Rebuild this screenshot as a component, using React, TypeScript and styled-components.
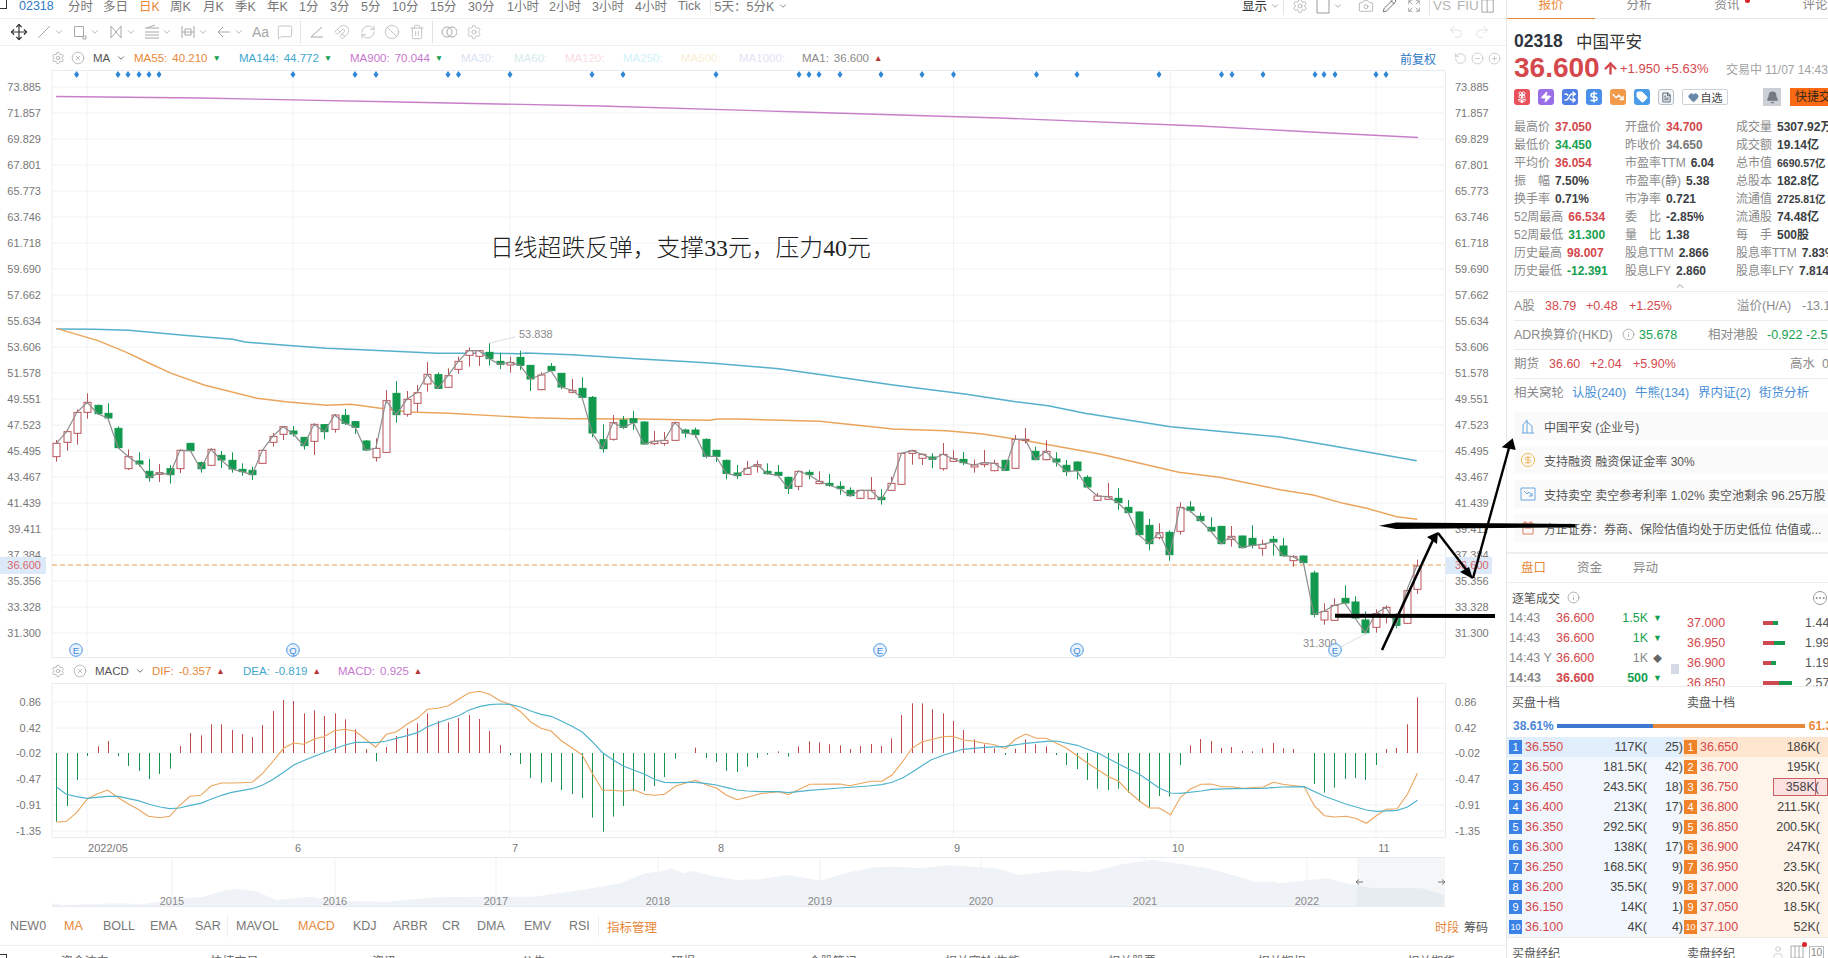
import React from "react";
import styled, { createGlobalStyle } from "styled-components";
import {
  Move, ChevronDown, ChevronUp, Settings, CircleX, Camera, Pencil, Trash2, Ban, Magnet, RefreshCw,
  Undo2, Redo2, RotateCcw, CircleMinus, CirclePlus, ArrowUp, Flower2, Zap, Shuffle, DollarSign, TrendingDown, Tag,
  FileText, Heart, Bell, Info, Ellipsis, CircleDollarSign, MessageSquare, User,
} from "lucide-react";

const Global = createGlobalStyle`
  html, body { margin: 0; padding: 0; background: #fff; overflow: hidden; }
  * { box-sizing: border-box; }
  body { font-family: "Liberation Sans", "Noto Sans CJK SC", sans-serif; font-size: 12px; color: #555; }
`;

const RED = "#d4484c";
const GREEN = "#16a04f";
const ORANGE = "#e8883a";
const BLUE = "#4a8fd6";

/* ---------- page ---------- */
const Page = styled.div`
  position: relative;
  width: 1828px;
  height: 958px;
  display: flex;
  overflow: hidden;
  background: #fff;
`;
const MainCol = styled.main`
  width: 1506px;
  flex: none;
  display: flex;
  flex-direction: column;
`;
const Overlay = styled.svg`
  position: absolute;
  left: 0;
  top: 0;
  pointer-events: none;
`;

/* ---------- top toolbar ---------- */
const TopBar = styled.div`
  height: 19px;
  flex: none;
  display: flex;
  align-items: center;
  padding-bottom: 7px;
  border-bottom: 1px solid #eceef1;
  overflow: hidden;
`;
const Corner = styled.span`
  width: 7px;
  height: 10px;
  margin: -3px 12px 0 0;
  border-right: 1px solid #333;
  border-bottom: 1px solid #333;
  flex: none;
`;
const Period = styled.span<{ $w: number; $c?: string }>`
  width: ${(p) => p.$w}px;
  flex: none;
  font-size: 12.5px;
  color: ${(p) => p.$c || "#777"};
  white-space: nowrap;
`;
const Sep = styled.span<{ $h?: number; $c?: string }>`
  width: 1px;
  height: ${(p) => p.$h || 18}px;
  background: ${(p) => p.$c || "#e3e5e8"};
  flex: none;
`;
const TopRight = styled.div`
  margin-left: auto;
  display: flex;
  align-items: center;
  width: 264px;
  color: #9a9a9a;
`;
const IconSlot = styled.span<{ $w: number }>`
  width: ${(p) => p.$w}px;
  flex: none;
  display: inline-flex;
  align-items: center;
`;
const GrayWord = styled.span<{ $w: number }>`
  width: ${(p) => p.$w}px;
  flex: none;
  padding-left: 3px;
  font-size: 13.5px;
  color: #b4b4b4;
`;

/* ---------- drawing toolbar ---------- */
const DrawBar = styled.div`
  height: 27px;
  flex: none;
  display: flex;
  align-items: center;
  padding: 0 8px;
  border-bottom: 1px solid #eceef1;
  color: #a8a8a8;
`;
const DrawMove = styled.span`
  width: 28px;
  padding-left: 2px;
  color: #333;
  display: inline-flex;
`;
const DrawPair = styled.span`
  width: 36px;
  flex: none;
  display: inline-flex;
  align-items: center;
  gap: 2px;
`;
const AaLabel = styled.span`
  font-size: 14px;
`;
const DrawRight = styled.div`
  margin-left: auto;
  display: flex;
  gap: 10px;
  padding-right: 8px;
  color: #d2d2d2;
`;

/* ---------- indicator legends ---------- */
const Legend = styled.div<{ $h: number }>`
  height: ${(p) => p.$h}px;
  flex: none;
  display: flex;
  align-items: center;
  padding-left: 51px;
  color: #8d8d8d;
  font-size: 11.5px;
`;
const LegendIcon = styled.span<{ $w: number }>`
  width: ${(p) => p.$w}px;
  flex: none;
  display: inline-flex;
  align-items: center;
`;
const LegendName = styled.span<{ $w: number }>`
  width: ${(p) => p.$w}px;
  flex: none;
  font-size: 11.5px;
  color: #555;
  display: inline-flex;
  align-items: center;
  gap: 6px;
`;
const MaItem = styled.span<{ $w: number; $c: string; $dim?: boolean }>`
  width: ${(p) => p.$w}px;
  flex: none;
  color: ${(p) => p.$c};
  opacity: ${(p) => (p.$dim ? 0.3 : 1)};
  display: inline-flex;
  align-items: center;
  gap: 5px;
  white-space: nowrap;
`;
const Mark = styled.i<{ $c: string }>`
  font-style: normal;
  font-size: 8.5px;
  color: ${(p) => p.$c};
`;
const LegendRight = styled.div`
  margin-left: auto;
  display: flex;
  align-items: center;
  gap: 4px;
  padding-right: 5px;
  color: #a5a5a5;
`;
const Adjust = styled.span`
  color: #2b78c5;
  font-size: 12px;
  margin-right: 14px;
`;

const ChartSvg = styled.svg`
  display: block;
  flex: none;
  text {
    font-family: "Liberation Sans", "Noto Sans CJK SC", sans-serif;
  }
`;

/* ---------- indicator bar ---------- */
const IndicatorBar = styled.div`
  height: 39px;
  flex: none;
  display: flex;
  align-items: center;
  padding-left: 10px;
  border-bottom: 1px solid #eceef1;
`;
const Ind = styled.span<{ $w: number; $on?: boolean }>`
  width: ${(p) => p.$w}px;
  flex: none;
  font-size: 12.5px;
  color: ${(p) => (p.$on ? ORANGE : "#777")};
`;
const IndRight = styled.div`
  margin-left: auto;
  padding-right: 18px;
  display: flex;
  gap: 5px;
  font-size: 12px;
`;
const BottomTabs = styled.div`
  display: flex;
  padding-top: 6px;
  color: #666;
`;
const BottomCorner = styled.span`
  width: 7px;
  height: 12px;
  margin: 2px 3px 0 0;
  border-top: 1px solid #333;
  border-right: 1px solid #333;
  flex: none;
`;
const BottomTab = styled.span`
  width: 149.6px;
  flex: none;
  text-align: center;
  font-size: 12px;
`;

/* ---------- sidebar ---------- */
const Side = styled.aside`
  width: 322px;
  flex: none;
  border-left: 1px solid #e6e7ea;
  overflow: hidden;
`;
const SideTabs = styled.div`
  display: flex;
  height: 19px;
  border-bottom: 1px solid #e6e7ea;
`;
const SideTab = styled.div<{ $on?: boolean }>`
  position: relative;
  width: 88px;
  flex: none;
  height: 19px;
  line-height: 10px;
  text-align: center;
  font-size: 12.5px;
  color: ${(p) => (p.$on ? ORANGE : "#888")};
  border-bottom: 1px solid ${(p) => (p.$on ? ORANGE : "transparent")};
`;
const RedDot = styled.i`
  position: absolute;
  left: 62px;
  top: -2px;
  width: 5px;
  height: 5px;
  border-radius: 50%;
  background: #d8232a;
`;
const Quote = styled.section`
  padding-left: 7px;
`;
const TitleRow = styled.div`
  margin-top: 7px;
  height: 30px;
  display: flex;
  align-items: center;
  color: #333;
`;
const Code = styled.b`
  width: 62px;
  font-size: 17.5px;
  color: #2f3640;
`;
const StockName = styled.span`
  font-size: 16.5px;
`;
const PriceRow = styled.div`
  height: 24px;
  display: flex;
  align-items: center;
  white-space: nowrap;
  color: ${RED};
`;
const BigPrice = styled.b`
  font-size: 28px;
  width: 88px;
  flex: none;
`;
const UpArrow = styled(ArrowUp)`
  flex: none;
  margin-right: 1px;
`;
const PriceChange = styled.span<{ $w: number }>`
  width: ${(p) => p.$w}px;
  flex: none;
  font-size: 13px;
`;
const TradeTime = styled.span`
  font-size: 12px;
  color: #a2a2a2;
`;
const BadgeRow = styled.div`
  margin-top: 8px;
  height: 18px;
  display: flex;
  align-items: center;
  white-space: nowrap;
`;
const Badge = styled.span<{ $c: string; $line?: boolean }>`
  width: 16px;
  height: 16px;
  margin-right: 8px;
  flex: none;
  border-radius: 3px;
  display: inline-flex;
  align-items: center;
  justify-content: center;
  background: ${(p) => (p.$line ? "#f4f6f8" : p.$c)};
  border: ${(p) => (p.$line ? "1px solid #b8c0c8" : "none")};
  color: ${(p) => (p.$line ? "#5a6a7a" : "#fff")};
`;
const WatchBtn = styled.span`
  width: 46px;
  height: 16px;
  border: 1px solid #ccd2d8;
  border-radius: 2px;
  display: inline-flex;
  align-items: center;
  justify-content: center;
  gap: 2px;
  font-size: 11px;
  color: #444;
  flex: none;
`;
const BellBox = styled.span`
  margin-left: 35px;
  width: 18px;
  height: 18px;
  background: #ccd0d6;
  color: #747a81;
  display: inline-flex;
  align-items: center;
  justify-content: center;
  flex: none;
`;
const QuickTrade = styled.span`
  margin-left: 9px;
  height: 18px;
  width: 60px;
  padding-left: 5px;
  background: #fb6a12;
  color: #3a2a1a;
  font-size: 12px;
  line-height: 18px;
  flex: none;
`;
const StatGrid = styled.div`
  margin-top: 12px;
  display: grid;
  grid-template-columns: 111px 111px 111px;
  grid-auto-flow: column;
  grid-template-rows: repeat(9, 18px);
  width: 333px;
`;
const Stat = styled.div`
  display: flex;
  align-items: baseline;
  line-height: 18px;
  gap: 5px;
  white-space: nowrap;
  color: #8a8a8a;
  font-size: 12px;
`;
const StatVal = styled.b<{ $c?: string; $small?: boolean }>`
  color: ${(p) => p.$c || "#3c3f44"};
  font-size: ${(p) => (p.$small ? 10.5 : 12)}px;
`;
const Caret = styled.div`
  height: 12px;
  margin-left: -7px;
  padding-left: 167px;
  border-bottom: 1px solid #ececec;
  color: #999;
  line-height: 0;
`;
const InfoRow = styled.div<{ $last?: boolean }>`
  height: 29px;
  display: flex;
  align-items: baseline;
  line-height: 28px;
  white-space: nowrap;
  font-size: 12.5px;
  color: #8a8a8a;
  border-bottom: 1px solid ${(p) => (p.$last ? "transparent" : "#ececec")};
`;
const Cell = styled.span<{ $w?: number; $c?: string }>`
  ${(p) => (p.$w ? `width: ${p.$w}px; flex: none;` : "")}
  color: ${(p) => p.$c || "inherit"};
  svg {
    vertical-align: -2px;
  }
`;
const Notices = styled.div`
  margin-top: 4px;
  display: flex;
  flex-direction: column;
  gap: 6px;
`;
const Notice = styled.div`
  height: 28px;
  background: #fafafa;
  display: flex;
  align-items: center;
  gap: 8px;
  padding-left: 6px;
  font-size: 12px;
  color: #555;
  white-space: nowrap;
`;
const SubTabs = styled.div`
  margin-top: 10px;
  height: 31px;
  border-top: 2px solid #eeeeee;
  border-bottom: 1px solid #ececec;
  display: flex;
  align-items: center;
  padding: 0 0 3px 14px;
`;
const SubTab = styled.span<{ $on?: boolean }>`
  width: 56px;
  font-size: 12.5px;
  color: ${(p) => (p.$on ? ORANGE : "#888")};
`;
const TradesHead = styled.div`
  height: 29px;
  display: flex;
  align-items: center;
  padding: 0 1px 0 5px;
  color: #555;
  font-size: 12px;
  gap: 7px;
`;
const MoreDots = styled(Ellipsis)`
  margin-left: auto;
  border: 1px solid #999;
  border-radius: 50%;
  color: #888;
`;
const TradesBody = styled.div`
  height: 75px;
  overflow: hidden;
  display: flex;
  border-bottom: 1px solid #ececec;
`;
const TickCol = styled.div`
  width: 160px;
  flex: none;
  margin-top: -4px;
`;
const Tick = styled.div<{ $bold?: boolean }>`
  height: 20px;
  display: flex;
  align-items: center;
  font-size: 12.5px;
  font-weight: ${(p) => (p.$bold ? 700 : 400)};
  color: #888;
  padding-left: 2px;
`;
const TickTime = styled.span`
  width: 47px;
  flex: none;
  white-space: nowrap;
`;
const TickPrice = styled.span`
  width: 46px;
  flex: none;
  color: ${RED};
`;
const TickVol = styled.span<{ $c: string }>`
  width: 46px;
  flex: none;
  text-align: right;
  color: ${(p) => p.$c};
`;
const TickMark = styled.span<{ $c: string }>`
  margin-left: 5px;
  font-size: 9px;
  color: ${(p) => p.$c};
`;
const ScrollCol = styled.div`
  width: 20px;
  flex: none;
  padding: 52px 0 0 4px;
`;
const ScrollThumb = styled.div`
  width: 8px;
  height: 10px;
  background: #d4dbe6;
`;
const BookCol = styled.div`
  margin-top: 1px;
  flex: 1;
`;
const BookRow = styled.div`
  height: 20px;
  display: flex;
  align-items: center;
  font-size: 12.5px;
  white-space: nowrap;
`;
const BookPrice = styled.span`
  width: 76px;
  flex: none;
  color: ${RED};
`;
const BookBar = styled.span`
  width: 42px;
  flex: none;
  display: flex;
  height: 4px;
`;
const BarPart = styled.i<{ $c: string; $w: number }>`
  width: ${(p) => p.$w}px;
  background: ${(p) => p.$c};
`;
const Heads = styled.div`
  height: 28px;
  display: flex;
  align-items: center;
  padding-left: 5px;
  color: #555;
`;
const HeadCell = styled.span`
  width: 175px;
  flex: none;
  font-size: 12px;
`;
const Ratio = styled.div`
  height: 22px;
  display: flex;
  align-items: center;
  padding-left: 6px;
  font-size: 12px;
  font-weight: 700;
  color: #4c86d8;
`;
const RatioBar = styled.i<{ $c: string; $w: number; $ml?: number }>`
  width: ${(p) => p.$w}px;
  height: 4px;
  background: ${(p) => p.$c};
  margin-left: ${(p) => p.$ml || 0}px;
  flex: none;
`;
const RatioEnd = styled.span`
  margin-left: 4px;
  color: ${ORANGE};
`;
const Orders = styled.div`
  border-bottom: 1px solid #ececec;
`;
const OrderRow = styled.div`
  height: 20px;
  display: flex;
  font-size: 12.5px;
  color: #444;
`;
const BuySide = styled.div<{ $top?: boolean }>`
  width: 176px;
  flex: none;
  display: flex;
  align-items: center;
  padding-left: 2px;
  background: ${(p) => (p.$top ? "#e1eefb" : "#f2f7fe")};
`;
const SellSide = styled.div<{ $top?: boolean }>`
  flex: 1;
  display: flex;
  align-items: center;
  padding-left: 1px;
  background: ${(p) => (p.$top ? "#fde5cf" : "#fff4ea")};
`;
const Num = styled.span<{ $c: string; $small?: boolean }>`
  width: 13px;
  height: 14px;
  flex: none;
  background: ${(p) => p.$c};
  color: #fff;
  font-size: ${(p) => (p.$small ? 9 : 11)}px;
  line-height: 14px;
  text-align: center;
`;
const OrderPrice = styled.span`
  margin-left: 3px;
  width: 40px;
  flex: none;
  color: ${RED};
  font-size: 12.5px;
`;
const OrderVol = styled.span`
  flex: 1;
  text-align: right;
`;
const OrderCount = styled.span`
  width: 36px;
  flex: none;
  text-align: right;
`;
const SellVol = styled.span<{ $hot?: boolean }>`
  position: relative;
  margin-left: auto;
  width: 55px;
  height: ${(p) => (p.$hot ? 18 : 20)}px;
  line-height: ${(p) => (p.$hot ? 16 : 20)}px;
  padding-right: 8px;
  text-align: right;
  white-space: nowrap;
  ${(p) =>
    p.$hot
      ? `background:#fde0e0;border:1px solid #c96060;
         &::after{content:"";position:absolute;right:11px;top:0;bottom:0;width:1px;background:#c96060;}`
      : ""}
`;
const Brokers = styled.div`
  height: 28px;
  display: flex;
  align-items: center;
  padding-left: 5px;
  color: #555;
`;
const BrokerIcons = styled.div`
  display: flex;
  align-items: center;
  gap: 4px;
  color: #aaa;
  margin-left: -91px;
`;
const BarsIcon = styled.span`
  position: relative;
  display: inline-flex;
  &::after {
    content: "";
    position: absolute;
    right: -2px;
    top: -2px;
    width: 5px;
    height: 5px;
    border-radius: 50%;
    background: #d8232a;
  }
`;
const TenBox = styled.span`
  border: 1px solid #bbb;
  padding: 0 1px;
  font-size: 10px;
  color: #888;
`;

/* ---------- small drawn icons ---------- */
const Glyph: React.FC<{ d: string; size?: number }> = ({ d, size = 16 }) => (
  <svg width={size} height={size} viewBox="0 0 16 16" fill="none" stroke="currentColor" strokeWidth="1">
    <path d={d} />
  </svg>
);
const G = {
  line: "M2 14L14 2",
  rect: "M2.5 2.5H11.5V12.5H2.5ZM11 12H14V15H11Z",
  cross: "M3 2L13 14M13 2L3 14M3 2V14M13 2V14",
  fib: "M1 4H15M1 8H15M1 11H15M1 14H15M3 4L11 1",
  width: "M2 2V14M14 2V14M2 8H14M5 5H11V11H5Z",
  arrow: "M14 8H2M7 3L2 8L7 13",
  angle: "M2 13L13 3M2 13H14",
  circles: "M6 3a5 5 0 1 0 0 10a5 5 0 1 0 0-10ZM11 3a5 5 0 1 0 0 10a5 5 0 1 0 0-10Z",
  frame: "M2 1H14V15H2Z",
  expand: "M2 6V2H6M10 2H14V6M14 10V14H10M6 14H2V10M2 2L6 6M14 2L10 6M14 14L10 10M2 14L6 10",
  ibox: "M1 1H14V15H1ZM7 1V15",
  building: "M2 15H14M3 15V7L7 2V15M7 4L12 8V15",
  shortDown: "M1 2H15V14H1ZM4 5L7 8L9 6L12 10M12 7V10H9",
  doc: "M3 3H13V14H3ZM5 1V4M11 1V4M5 8H11",
  bars: "M2 2H14V14H2ZM6 2V14M10 2V14",
};

/* ---------- chart data ---------- */
type C = [number, number, number, number, number];
const batch1: C[] = [
  [1,400,440,390,455],[1,365,397,358,422],[1,307,370,298,404],[1,277,307,250,326],[0,286,311,284,313],[0,310,324,280,325],
  [0,355,413,349,415],[1,440,476,418,480],[0,453,462,427,470],[0,484,503,447,515],[1,488,493,462,516],[0,476,494,465,521],
  [1,421,476,418,489],[0,400,422,400,423],[0,458,476,455,488],[1,418,466,415,468],[0,436,450,423,474],[0,451,477,427,488],
  [0,478,485,460,497],[0,481,494,470,510],[1,421,460,420,462],[1,379,397,369,410],[1,350,373,348,390],[0,363,372,348,380],
  [0,382,407,381,419],[1,343,394,340,435],[0,344,365,342,388],[1,315,358,312,368],[0,316,340,297,345],[0,335,352,333,372],
  [0,393,420,390,423],[1,415,443,385,455],[1,272,427,240,428],[0,250,314,213,338],[1,268,313,243,320],[1,248,280,225,305],
  [1,193,222,156,245],[0,194,235,187,237],[1,197,232,175,233],[1,154,178,140,191],[1,122,136,112,170],[1,122,139,120,168],
  [0,127,146,100,167],[0,154,163,128,177],[1,157,165,140,188],[0,142,166,122,180],[0,166,207,165,243],[1,195,239,187,241],
  [0,169,182,159,186],[0,190,231,189,238],[1,241,247,207,250],[0,235,262,202,264],[0,262,369,258,382],[0,389,416,343,428],
  [1,338,388,315,392],[0,330,352,318,357],[0,326,338,303,360],[0,336,402,334,403],[1,394,401,363,405],[1,391,400,366,407],
  [1,338,391,335,392],[0,360,369,356,383],[0,360,374,353,383],[0,388,439,385,445],[0,421,439,420,456],[0,451,490,449,508],
  [0,489,497,465,507],[1,475,493,453,495],[1,464,469,452,488],[0,484,491,460,494],[0,487,496,465,498],[0,502,535,500,552],
  [1,484,529,481,541],[0,487,494,480,508],[1,514,521,484,523],[0,520,526,492,530],[0,529,536,514,554],[0,541,557,532,560],
  [1,541,565,540,566],[1,541,566,501,568],[0,562,569,538,584],[1,520,541,500,543],[1,430,523,429,524],[1,422,430,419,464],
  [1,433,445,430,465],[0,441,448,430,475],[1,433,476,399,482],[1,446,454,421,456],[0,448,458,426,465],[1,465,471,449,488],
  [1,458,464,420,472],[1,460,482,449,484],[0,451,481,449,483],[1,388,475,375,476],[1,388,389,354,400],[0,424,449,410,450],
  [1,424,449,391,451],[0,447,456,427,470],[0,466,485,450,498],[0,456,482,454,508],[0,502,531,496,533],[1,558,571,549,573],
  [1,560,568,519,570],[0,565,578,534,600],
];
const batch2: C[] = [
  [0,322,338,300,340],[0,336,404,334,406],[0,376,431,357,451],[1,398,413,370,418],[0,397,464,391,482],[1,322,394,307,404],
  [0,321,332,303,338],[0,349,362,338,364],[0,382,393,352,395],[0,379,431,378,433],[1,409,418,378,440],[0,408,443,407,445],
  [0,415,436,376,445],[1,433,445,419,467],[0,418,426,408,467],[0,438,467,414,470],[1,470,482,465,500],[0,468,488,467,490],
  [0,519,643,512,652],[1,634,660,610,674],[1,616,661,595,663],[0,595,609,556,612],[0,606,654,589,656],[0,660,698,634,703],
  [1,641,682,628,698],[1,622,650,616,670],[0,648,676,640,685],[1,572,670,570,672],[1,498,568,479,582],
];
const candles: C[] = [...batch1, ...batch2.map((c) => [c[0], c[1] + 270, c[2] + 270, c[3] + 270, c[4] + 270] as C)];
const cx = (i: number) => 56.3 + i * 10.307;
const cy = (v: number) => 310 + v / 3;
const closeLine = candles.map((c, i) => `${cx(i).toFixed(1)},${cy(c[0] ? c[1] : c[2]).toFixed(1)}`).join(" ");

type P = [number, number];
const pts = (arr: P[], ox: number, fx: number, oy: number) => arr.map(([x, y]) => `${(ox + x / fx).toFixed(1)},${(oy + y / 3).toFixed(1)}`).join(" ");

const ma144 = [
  pts([[138,57],[230,58],[315,61],[450,76],[570,88],[600,96],[700,106],[800,115],[900,120],[1070,130],[1170,130],[1270,131],[1290,129],[1400,134],[1568,147]], 0, 2.45, 310),
  pts([[100,154],[180,160],[340,176],[450,195],[620,225],[800,253],[920,275],[1000,287],[1090,310],[1300,350],[1568,381]], 640, 2.45, 310),
  pts([[1000,138],[1250,182]], 1000, 3, 400),
].join(" ");
const ma55 = [
  pts([[138,55],[240,92],[310,127],[370,162],[420,190],[500,225],[630,265],[700,275],[800,286],[860,283],[950,298],[1000,306],[1100,310],[1300,323],[1400,326],[1568,327]], 0, 2.45, 310),
  pts([[170,331],[190,327],[240,327],[440,334],[620,357],[750,362],[840,372],[960,395],[1130,433],[1320,487],[1420,502],[1568,539]], 640, 2.45, 310),
  pts([[940,285],[1030,310],[1100,325],[1190,350],[1252,358]], 1000, 3, 400),
].join(" ");
const ma900 = "56,96.5 200,98 400,102 600,106 800,112 1000,118 1200,126 1330,133 1418,137.5";

const priceLabels = ["73.885","71.857","69.829","67.801","65.773","63.746","61.718","59.690","57.662","55.634","53.606","51.578","49.551","47.523","45.495","43.467","41.439","39.411","37.384","35.356","33.328","31.300"];
const gridX = [87, 293, 510, 716, 953.5, 1170.6, 1376];
const diamonds = [76.6,118,128,139,149,159,293,355,376,448,458.5,510,592,623,716,799,809,819,840,881,922,953.5,1036.5,1077,1159,1221.5,1232,1263,1315,1324,1335,1376,1386];
const events: [number, string][] = [[76,"E"],[293,"Q"],[880,"E"],[1077,"Q"],[1335,"E"]];

const macdBars = [515,468,390,318,289,273,318,348,363,387,372,356,288,249,256,223,223,240,252,261,225,183,150,153,190,181,198,190,208,238,297,334,291,258,235,220,190,213,217,204,195,207,243,285,316,342,384,398,396,420,432,444,503,545,500,468,424,423,408,381,326,309,293,324,336,363,366,350,324,
  314,304,320,289,274,277,283,286,297,288,282,288,265,195,160,160,178,190,213,240,268,283,295,315,296,268,283,289,315,345,357,390,416,420,416,428,456,472,438,440,345,286,267,273,294,291,303,304,295,279,295,297,309,402,428,413,387,384,390,345,297,294,223,142];
const dif = [
  pts([[117,517],[137,514],[158,488],[180,447],[200,432],[222,420],[244,443],[265,462],[285,478],[306,499],[330,503],[350,499],[370,467],[392,439],[414,436],[435,408],[457,399],[478,399],[498,398],[520,397],[542,370],[562,336],[585,295],[605,279],[626,283],[650,266],[668,260],[690,242],[712,238],[733,244],[754,268],[775,292],[797,253],[818,245],[840,222],[861,205],[882,178],[903,175],[925,167],[946,148],[967,129],[989,124],[1010,133],[1031,152],[1052,163],[1074,185],[1095,216],[1116,235],[1137,243],[1158,272],[1180,293],[1201,315],[1222,370],[1243,421],[1265,421],[1286,424],[1308,419],[1330,433],[1350,436],[1371,433],[1394,408],[1415,399],[1435,391],[1458,405],[1478,414],[1498,435],[1520,449],[1542,442],[1568,431]], 0, 2.063, 650),
  pts([[40,425],[60,434],[105,403],[170,402],[190,407],[235,394],[258,394],[280,375],[302,335],[322,295],[344,275],[366,268],[388,260],[408,259],[432,270],[454,274],[476,280],[497,284],[520,296],[541,268],[563,252],[586,265],[607,265],[650,295],[694,339],[739,380],[760,394],[781,425],[804,453],[825,474],[846,474],[870,494],[891,442],[912,417],[935,403],[956,402],[978,410],[1000,410],[1022,415],[1066,411],[1088,397],[1108,403],[1133,407],[1153,410],[1175,468],[1196,497],[1218,501],[1241,499],[1262,505],[1285,520],[1306,497],[1327,478],[1350,476],[1372,432],[1393,370]], 760, 2.119, 650),
].join(" ");
const dea = [
  pts([[117,412],[137,433],[158,440],[180,445],[200,442],[222,439],[244,439],[265,446],[285,452],[306,462],[330,471],[350,476],[370,474],[392,466],[414,460],[435,448],[457,436],[478,427],[498,422],[520,416],[542,405],[562,389],[585,367],[605,346],[626,332],[650,318],[668,308],[690,296],[712,285],[733,277],[754,277],[775,278],[797,273],[818,265],[840,257],[861,248],[882,230],[903,218],[925,207],[946,197],[967,181],[989,170],[1010,164],[1031,162],[1052,163],[1074,171],[1095,183],[1116,193],[1137,199],[1158,213],[1180,229],[1201,246],[1222,275],[1243,308],[1265,330],[1286,348],[1308,361],[1330,373],[1350,388],[1371,397],[1394,398],[1415,397],[1435,397],[1458,401],[1478,405],[1498,412],[1520,420],[1542,423],[1568,425]], 0, 2.063, 650),
  pts([[40,425],[60,428],[105,421],[170,414],[230,408],[258,404],[280,397],[302,384],[322,367],[362,330],[390,315],[430,298],[476,292],[520,289],[563,280],[607,274],[628,273],[672,286],[717,310],[760,342],[804,373],[846,414],[870,429],[891,430],[935,423],[956,418],[1000,416],[1066,415],[1108,411],[1153,410],[1196,439],[1241,462],[1285,480],[1306,484],[1350,481],[1372,471],[1393,451]], 760, 2.119, 650),
].join(" ");
const macdLabels: [string, number][] = [["0.86",702],["0.42",728],["-0.02",753],["-0.47",779],["-0.91",805],["-1.35",831]];
const dateLabels: [string, number][] = [["2022/05",108],["6",298],["7",515],["8",721],["9",957],["10",1178],["11",1384]];

const miniArea = "52,907 " + [
  pts([[107,190],[130,195],[200,192],[250,190],[290,193],[330,185],[380,175],[420,170],[460,152],[490,147],[530,155],[570,180],[640,170],[700,183],[800,185],[900,172],[1000,170],[1100,170],[1200,150],[1280,130],[1330,100],[1360,95],[1385,85],[1410,100],[1430,93],[1470,108],[1520,120],[1568,118]], 0, 2.063, 840),
  pts([[60,105],[130,122],[180,100],[240,82],[290,80],[340,85],[400,76],[500,85],[550,105],[640,90],[700,97],[770,72],[830,60],[880,70],[950,85],[1050,125],[1090,125],[1100,130],[1200,115],[1260,135],[1300,145],[1400,145],[1450,165],[1450,200]], 760, 2.119, 840),
].join(" ");
const years: [string, number][] = [["2015",172],["2016",335],["2017",496],["2018",658],["2019",820],["2020",981],["2021",1145],["2022",1307]];

const MainChart = () => (
  <ChartSvg width={1506} height={588} viewBox="0 70 1506 588">
    {priceLabels.map((_, i) => (
      <line key={i} x1={52} x2={1445} y1={87 + 26 * i} y2={87 + 26 * i} stroke="#eff2f6" />
    ))}
    {gridX.map((x) => (
      <line key={x} x1={x} x2={x} y1={70} y2={658} stroke="#eff2f6" />
    ))}
    <path d="M52 70.5H1445.5V657.5H52Z" fill="none" stroke="#e8ecf0" />
    {diamonds.map((x, i) => (
      <polygon key={i} points={`${x},71 ${x + 2.5},74.5 ${x},78 ${x - 2.5},74.5`} fill="#2f86d6" />
    ))}
    <polyline points={ma900} fill="none" stroke="#c77fc8" strokeWidth="1.4" />
    <polyline points={ma144} fill="none" stroke="#55b0cc" strokeWidth="1.5" />
    <polyline points={ma55} fill="none" stroke="#eba45c" strokeWidth="1.4" />
    <line x1={52} x2={1445} y1={565} y2={565} stroke="#e99b50" strokeDasharray="5 3" />
    {candles.map((c, i) => {
      const x = Math.round(cx(i)) + 0.5;
      const col = c[0] ? "#b9545a" : "#13994e";
      return (
        <g key={i}>
          <line x1={x} x2={x} y1={cy(c[3])} y2={cy(c[4])} stroke={col} />
          <rect x={x - 3.5} y={cy(c[1])} width={7} height={Math.max(cy(c[2]) - cy(c[1]), 1)} fill={c[0] ? "#fff" : col} stroke={col} />
        </g>
      );
    })}
    <polyline points={closeLine} fill="none" stroke="#8c8c8c" strokeWidth="1.2" />
    {priceLabels.map((t, i) => (
      <g key={t} fontSize={11} fill="#777">
        <text x={41} y={91 + 26 * i} textAnchor="end">{t}</text>
        <text x={1455} y={91 + 26 * i}>{t}</text>
      </g>
    ))}
    <rect x={0} y={557} width={46} height={17} fill="#dbe9f8" />
    <rect x={1446} y={557} width={46} height={17} fill="#dbe9f8" />
    <text x={41} y={569} textAnchor="end" fontSize={11} fill="#d8686a">36.600</text>
    <text x={1455} y={569} fontSize={11} fill="#d8686a">36.600</text>
    <polyline points="490,343 515,337" fill="none" stroke="#ddd" />
    <text x={519} y={338} fontSize={11} fill="#8b8b8b">53.838</text>
    <polyline points="1335,650 1367,633" fill="none" stroke="#ddd" />
    <text x={1303} y={647} fontSize={11} fill="#8b8b8b">31.300</text>
    <text x={490} y={256} fontSize={23.8} fill="#222" fontWeight={300} style={{ fontFamily: '"Liberation Serif","Noto Sans CJK SC",serif' }}>日线超跌反弹，支撑33元，压力40元</text>
    {events.map(([x, t]) => (
      <g key={x}>
        <circle cx={x} cy={650} r={6.3} fill="#eaf3fc" stroke="#4a97e0" />
        <text x={x} y={653.5} fontSize={9.5} textAnchor="middle" fill="#3d8ad6">{t}</text>
      </g>
    ))}
  </ChartSvg>
);

const MacdChart = () => (
  <ChartSvg width={1506} height={155} viewBox="0 683 1506 155">
    {macdLabels.map(([, y]) => (
      <line key={y} x1={52} x2={1445} y1={y} y2={y} stroke="#eff2f6" />
    ))}
    {gridX.map((x) => (
      <line key={x} x1={x} x2={x} y1={683} y2={838} stroke="#eff2f6" />
    ))}
    <path d="M52 683.5H1445.5V837.5H52Z" fill="none" stroke="#e8ecf0" />
    {macdBars.map((v, i) => {
      const x = Math.round(cx(i)) + 0.5;
      const end = 650 + v / 3;
      if (v === 309) return null;
      return <line key={i} x1={x} x2={x} y1={753} y2={end} stroke={v < 309 ? "#c0484c" : "#17924c"} />;
    })}
    <polyline points={dif} fill="none" stroke="#eba45c" strokeWidth="1.1" />
    <polyline points={dea} fill="none" stroke="#4fb3cc" strokeWidth="1.2" />
    {macdLabels.map(([t, y]) => (
      <g key={t} fontSize={11} fill="#777">
        <text x={41} y={y + 4} textAnchor="end">{t}</text>
        <text x={1455} y={y + 4}>{t}</text>
      </g>
    ))}
  </ChartSvg>
);

const DateAxis = () => (
  <ChartSvg width={1506} height={19} viewBox="0 838 1506 19">
    {dateLabels.map(([t, x]) => (
      <text key={t} x={x} y={852} fontSize={11} textAnchor="middle" fill="#777">{t}</text>
    ))}
  </ChartSvg>
);

const MiniMap = () => (
  <ChartSvg width={1506} height={50} viewBox="0 857 1506 50">
    {years.map(([, x]) => (
      <line key={x} x1={x} x2={x} y1={857} y2={907} stroke="#eff1f4" />
    ))}
    <polygon points={miniArea} fill="#eff2f6" />
    <rect x={1357} y={857} width={88} height={50} fill="#cfd4da" opacity="0.22" />
    <line x1={52} x2={1445} y1={857.5} y2={857.5} stroke="#e8ecf0" />
    <line x1={52} x2={1445} y1={906.5} y2={906.5} stroke="#e8ecf0" />
    {years.map(([t, x]) => (
      <text key={t} x={x} y={905} fontSize={11} textAnchor="middle" fill="#8a8a8a">{t}</text>
    ))}
    <path d="M1363 882H1356M1359 879.5L1356 882L1359 884.5M1438 882H1445M1442 879.5L1445 882L1442 884.5" fill="none" stroke="#777" />
  </ChartSvg>
);

/* ---------- text data ---------- */
const periods: [string, number, string?][] = [
  ["02318",49,"#2f7ac6"],["分时",35],["多日",36],["日K",31,ORANGE],["周K",33],["月K",32],["季K",32],["年K",32],["1分",31],["3分",31],["5分",31],
  ["10分",38],["15分",38],["30分",39],["1小时",42],["2小时",43],["3小时",43],["4小时",43],["Tick",32],
];
const maItems: [string, string, string, number][] = [
  ["MA55:","40.210",ORANGE,105],["MA144:","44.772","#3fa7cd",111],["MA900:","70.044","#c878cf",111],
];
const dimItems: [string, number, string][] = [
  ["MA30:",53,"#7fa4d8"],["MA60:",51,"#6fc0b8"],["MA120:",58,"#f08ca0"],["MA250:",58,"#60cfe8"],["MA500:",58,"#f0c870"],["MA1000:",63,"#a89ae0"],
];
const macdItems: [string, string, string, number][] = [
  ["DIF:","-0.357",ORANGE,91],["DEA:","-0.819","#3fa7cd",95],["MACD:","0.925","#c878cf",90],
];
const indicators: [string, number, boolean?][] = [
  ["NEW0",54],["MA",39,true],["BOLL",47],["EMA",45],["SAR",32],
];
const indicators2: [string, number, boolean?][] = [
  ["MAVOL",62],["MACD",55,true],["KDJ",40],["ARBR",49],["CR",35],["DMA",47],["EMV",45],["RSI",29],
];
const bottomTabs = ["资金流向","快捷交易","资讯","公告","研报","个股笔记","相关窝轮/牛熊","相关股票","相关期权","相关期货"];

type S = [string, string, string?, boolean?];
const stats: S[] = [
  ["最高价","37.050",RED],["最低价","34.450",GREEN],["平均价","36.054",RED],["振\u3000幅","7.50%"],["换手率","0.71%"],
  ["52周最高","66.534",RED],["52周最低","31.300",GREEN],["历史最高","98.007",RED],["历史最低","-12.391",GREEN],
  ["开盘价","34.700",RED],["昨收价","34.650","#777"],["市盈率TTM","6.04"],["市盈率(静)","5.38"],["市净率","0.721"],
  ["委\u3000比","-2.85%"],["量\u3000比","1.38"],["股息TTM","2.866"],["股息LFY","2.860"],
  ["成交量","5307.92万"],["成交额","19.14亿"],["总市值","6690.57亿",undefined,true],["总股本","182.8亿"],["流通值","2725.81亿",undefined,true],
  ["流通股","74.48亿"],["每\u3000手","500股"],["股息率TTM","7.83%"],["股息率LFY","7.814%"],
];
const ticks: [string, string, string, string, string, boolean?][] = [
  ["14:43","36.600","1.5K",GREEN,"▼"],["14:43","36.600","1K",GREEN,"▼"],["14:43 Y","36.600","1K","#888","◆"],["14:43","36.600","500",GREEN,"▼",true],
];
const book: [string, number, number, string][] = [
  ["37.000",10,5,"1.44"],["36.950",11,11,"1.99"],["36.900",8,5,"1.19"],["36.850",16,13,"2.57"],
];
const buys = [["36.550","117K(","25)"],["36.500","181.5K(","42)"],["36.450","243.5K(","18)"],["36.400","213K(","17)"],["36.350","292.5K(","9)"],["36.300","138K(","17)"],["36.250","168.5K(","9)"],["36.200","35.5K(","9)"],["36.150","14K(","1)"],["36.100","4K(","4)"]];
const sells = [["36.650","186K("],["36.700","195K("],["36.750","358K("],["36.800","211.5K("],["36.850","200.5K("],["36.900","247K("],["36.950","23.5K("],["37.000","320.5K("],["37.050","18.5K("],["37.100","52K("]];

export default function App() {
  return (
    <Page>
      <Global />
      <MainCol>
        <TopBar>
          <Corner />
          {periods.map(([t, w, c]) => (
            <Period key={t} $w={w} $c={c}>{t}</Period>
          ))}
          <Sep />
          <Period $w={80} $c="#777">&nbsp;5天：5分K <ChevronDown size={10} /></Period>
          <TopRight>
            <Period $w={28} $c="#333">显示</Period>
            <IconSlot $w={13}><ChevronDown size={10} /></IconSlot>
            <Sep />
            <IconSlot $w={8} />
            <IconSlot $w={23}><Settings size={16} strokeWidth={1} /></IconSlot>
            <IconSlot $w={18}><Glyph d={G.frame} /></IconSlot>
            <IconSlot $w={25}><ChevronDown size={10} /></IconSlot>
            <IconSlot $w={24}><Camera size={16} strokeWidth={1} /></IconSlot>
            <IconSlot $w={25}><Pencil size={15} strokeWidth={1.1} color="#333" /></IconSlot>
            <IconSlot $w={22}><Glyph d={G.expand} size={14} /></IconSlot>
            <Sep />
            <GrayWord $w={24}>VS</GrayWord>
            <GrayWord $w={27}>FIU</GrayWord>
            <IconSlot $w={14}><Glyph d={G.ibox} /></IconSlot>
          </TopRight>
        </TopBar>

        <DrawBar>
          <DrawMove><Move size={18} strokeWidth={1.6} /></DrawMove>
          {[G.line, G.rect, G.cross, G.fib, G.width, G.arrow].map((d) => (
            <DrawPair key={d}>
              <Glyph d={d} />
              <ChevronDown size={10} />
            </DrawPair>
          ))}
          <IconSlot $w={25}><AaLabel>Aa</AaLabel></IconSlot>
          <IconSlot $w={23}><MessageSquare size={16} strokeWidth={1} /></IconSlot>
          <Sep $h={22} />
          <IconSlot $w={8} />
          <IconSlot $w={25}><Glyph d={G.angle} /></IconSlot>
          <IconSlot $w={26}><Magnet size={16} strokeWidth={1} /></IconSlot>
          <IconSlot $w={24}><RefreshCw size={16} strokeWidth={1} /></IconSlot>
          <IconSlot $w={25}><Ban size={16} strokeWidth={1} /></IconSlot>
          <IconSlot $w={23}><Trash2 size={16} strokeWidth={1} /></IconSlot>
          <Sep $h={22} />
          <IconSlot $w={8} />
          <IconSlot $w={25}><Glyph d={G.circles} /></IconSlot>
          <IconSlot $w={20}><Settings size={16} strokeWidth={1} /></IconSlot>
          <DrawRight>
            <Undo2 size={16} strokeWidth={1} />
            <Redo2 size={16} strokeWidth={1} />
          </DrawRight>
        </DrawBar>

        <Legend $h={24}>
          <LegendIcon $w={20}><Settings size={14} strokeWidth={1} /></LegendIcon>
          <LegendIcon $w={22}><CircleX size={14} strokeWidth={1} /></LegendIcon>
          <LegendName $w={41}>MA <ChevronDown size={10} /></LegendName>
          {maItems.map(([n, v, c, w]) => (
            <MaItem key={n} $w={w} $c={c}>
              <span>{n}</span>
              <span>{v}</span>
              <Mark $c={GREEN}>▼</Mark>
            </MaItem>
          ))}
          {dimItems.map(([n, w, c]) => (
            <MaItem key={n} $w={w} $c={c} $dim>{n}</MaItem>
          ))}
          <MaItem $w={90} $c="#8a8a8a">
            <span>MA1:</span>
            <span>36.600</span>
            <Mark $c="#b83232">▲</Mark>
          </MaItem>
          <LegendRight>
            <Adjust>前复权</Adjust>
            <RotateCcw size={13} strokeWidth={1} />
            <CircleMinus size={13} strokeWidth={1} />
            <CirclePlus size={13} strokeWidth={1} />
          </LegendRight>
        </Legend>
        <MainChart />

        <Legend $h={25}>
          <LegendIcon $w={22}><Settings size={14} strokeWidth={1} /></LegendIcon>
          <LegendIcon $w={22}><CircleX size={14} strokeWidth={1} /></LegendIcon>
          <LegendName $w={57}>MACD <ChevronDown size={10} /></LegendName>
          {macdItems.map(([n, v, c, w]) => (
            <MaItem key={n} $w={w} $c={c}>
              <span>{n}</span>
              <span>{v}</span>
              <Mark $c="#b83232">▲</Mark>
            </MaItem>
          ))}
        </Legend>
        <MacdChart />
        <DateAxis />
        <MiniMap />

        <IndicatorBar>
          {indicators.map(([t, w, on]) => (
            <Ind key={t} $w={w} $on={on}>{t}</Ind>
          ))}
          <Sep $h={22} $c="#eef0f2" />
          <Ind $w={8} />
          {indicators2.map(([t, w, on]) => (
            <Ind key={t} $w={w} $on={on}>{t}</Ind>
          ))}
          <Sep $h={22} $c="#eef0f2" />
          <Ind $w={8} />
          <Ind $w={60} $on>指标管理</Ind>
          <IndRight>
            <Cell $c={ORANGE}>时段</Cell>
            <Cell>筹码</Cell>
          </IndRight>
        </IndicatorBar>
        <BottomTabs>
          <BottomCorner />
          {bottomTabs.map((t) => (
            <BottomTab key={t}>{t}</BottomTab>
          ))}
        </BottomTabs>
      </MainCol>

      <Side>
        <SideTabs>
          <SideTab $on>报价</SideTab>
          <SideTab>分析</SideTab>
          <SideTab>资讯<RedDot /></SideTab>
          <SideTab>评论</SideTab>
        </SideTabs>
        <Quote>
          <TitleRow>
            <Code>02318</Code>
            <StockName>中国平安</StockName>
          </TitleRow>
          <PriceRow>
            <BigPrice>36.600</BigPrice>
            <UpArrow size={17} strokeWidth={3.4} />
            <PriceChange $w={44}>+1.950</PriceChange>
            <PriceChange $w={62}>+5.63%</PriceChange>
            <TradeTime>交易中 11/07 14:43(太</TradeTime>
          </PriceRow>
          <BadgeRow>
            <Badge $c="#e8505b"><Flower2 size={12} /></Badge>
            <Badge $c="#9a6ee8"><Zap size={12} fill="#fff" /></Badge>
            <Badge $c="#4f7fe4"><Shuffle size={12} strokeWidth={3} /></Badge>
            <Badge $c="#4a90ea"><DollarSign size={12} strokeWidth={3} /></Badge>
            <Badge $c="#f2994a"><TrendingDown size={12} strokeWidth={3} /></Badge>
            <Badge $c="#4a9be8"><Tag size={12} fill="#fff" /></Badge>
            <Badge $c="#fff" $line><FileText size={11} strokeWidth={2.2} /></Badge>
            <WatchBtn><Heart size={11} fill="#6a86a8" color="#6a86a8" />自选</WatchBtn>
            <BellBox><Bell size={13} fill="#747a81" /></BellBox>
            <QuickTrade>快捷交易</QuickTrade>
          </BadgeRow>
          <StatGrid>
            {stats.map(([l, v, c, small]) => (
              <Stat key={l}>
                {l}
                <StatVal $c={c} $small={small}>{v}</StatVal>
              </Stat>
            ))}
          </StatGrid>
          <Caret><ChevronUp size={12} /></Caret>
          <InfoRow>
            <Cell $w={31}>A股</Cell>
            <Cell $w={41} $c={RED}>38.79</Cell>
            <Cell $w={43} $c={RED}>+0.48</Cell>
            <Cell $w={108} $c={RED}>+1.25%</Cell>
            <Cell $w={65}>溢价(H/A)</Cell>
            <Cell>-13.1</Cell>
          </InfoRow>
          <InfoRow>
            <Cell $w={108}>ADR换算价(HKD)</Cell>
            <Cell $w={17}><Info size={13} strokeWidth={1.2} /></Cell>
            <Cell $w={69} $c={GREEN}>35.678</Cell>
            <Cell $w={59}>相对港股</Cell>
            <Cell $w={39} $c={GREEN}>-0.922</Cell>
            <Cell $c={GREEN}>-2.5</Cell>
          </InfoRow>
          <InfoRow>
            <Cell $w={35}>期货</Cell>
            <Cell $w={41} $c={RED}>36.60</Cell>
            <Cell $w={43} $c={RED}>+2.04</Cell>
            <Cell $w={157} $c={RED}>+5.90%</Cell>
            <Cell $w={32}>高水</Cell>
            <Cell>0</Cell>
          </InfoRow>
          <InfoRow $last>
            <Cell $w={58}>相关窝轮</Cell>
            <Cell $w={63} $c={BLUE}>认股(240)</Cell>
            <Cell $w={63} $c={BLUE}>牛熊(134)</Cell>
            <Cell $w={61} $c={BLUE}>界内证(2)</Cell>
            <Cell $c={BLUE}>街货分析</Cell>
          </InfoRow>
          <Notices>
            <Notice><Cell $c="#6aa5dc"><Glyph d={G.building} /></Cell>中国平安 (企业号)</Notice>
            <Notice><CircleDollarSign size={16} strokeWidth={1.3} color="#eeb04a" />支持融资 融资保证金率 30%</Notice>
            <Notice><Cell $c="#6aa5dc"><Glyph d={G.shortDown} /></Cell>支持卖空 卖空参考利率 1.02% 卖空池剩余 96.25万股</Notice>
            <Notice><Cell $c="#e07a5f"><Glyph d={G.doc} /></Cell>方正证券：券商、保险估值均处于历史低位 估值或...</Notice>
          </Notices>
        </Quote>
        <SubTabs>
          <SubTab $on>盘口</SubTab>
          <SubTab>资金</SubTab>
          <SubTab>异动</SubTab>
        </SubTabs>
        <TradesHead>
          逐笔成交
          <Info size={13} strokeWidth={1.2} color="#888" />
          <MoreDots size={14} />
        </TradesHead>
        <TradesBody>
          <TickCol>
            {ticks.map(([t, p, v, c, m, bold], i) => (
              <Tick key={i} $bold={bold}>
                <TickTime>{t}</TickTime>
                <TickPrice>{p}</TickPrice>
                <TickVol $c={c}>{v}</TickVol>
                <TickMark $c={m === "◆" ? "#666" : c}>{m}</TickMark>
              </Tick>
            ))}
          </TickCol>
          <ScrollCol><ScrollThumb /></ScrollCol>
          <BookCol>
            {book.map(([p, r, g, v]) => (
              <BookRow key={p}>
                <BookPrice>{p}</BookPrice>
                <BookBar>
                  <BarPart $c="#cf4a50" $w={r} />
                  <BarPart $c="#17994f" $w={g} />
                </BookBar>
                {v}
              </BookRow>
            ))}
          </BookCol>
        </TradesBody>
        <Heads>
          <HeadCell>买盘十档</HeadCell>
          <HeadCell>卖盘十档</HeadCell>
        </Heads>
        <Ratio>
          38.61%
          <RatioBar $c="#4078d0" $w={96} $ml={3} />
          <RatioBar $c="#e8883a" $w={152} />
          <RatioEnd>61.39%</RatioEnd>
        </Ratio>
        <Orders>
          {buys.map((b, i) => (
            <OrderRow key={b[0]}>
              <BuySide $top={i === 0}>
                <Num $c="#3b82e6" $small={i === 9}>{i + 1}</Num>
                <OrderPrice>{b[0]}</OrderPrice>
                <OrderVol>{b[1]}</OrderVol>
                <OrderCount>{b[2]}</OrderCount>
              </BuySide>
              <SellSide $top={i === 0}>
                <Num $c="#f0822a" $small={i === 9}>{i + 1}</Num>
                <OrderPrice>{sells[i][0]}</OrderPrice>
                <SellVol $hot={i === 2}>{sells[i][1]}</SellVol>
              </SellSide>
            </OrderRow>
          ))}
        </Orders>
        <Brokers>
          <HeadCell>买盘经纪</HeadCell>
          <HeadCell>卖盘经纪</HeadCell>
          <BrokerIcons>
            <User size={14} strokeWidth={1} />
            <BarsIcon><Glyph d={G.bars} /></BarsIcon>
            <TenBox>10</TenBox>
          </BrokerIcons>
        </Brokers>
      </Side>

      <Overlay width={1828} height={958} viewBox="0 0 1828 958">
        <polygon points="1379,525.7 1396,522.6 1575,524 1576,527.4 1396,529" fill="#000" />
        <line x1={1335} x2={1495} y1={615.7} y2={616} stroke="#000" strokeWidth="4" />
        <line x1={1382} y1={650} x2={1433} y2={540} stroke="#000" strokeWidth="2.6" />
        <polygon points="1438,532 1427,537 1437,544" fill="#000" />
        <line x1={1438} y1={533} x2={1468} y2={572} stroke="#000" strokeWidth="2.4" />
        <polygon points="1473,579 1460,572 1469,567" fill="#000" />
        <line x1={1473} y1={578} x2={1509} y2={448} stroke="#000" strokeWidth="2.4" />
        <polygon points="1512.7,438.3 1501.7,447.3 1515.7,450" fill="#000" />
      </Overlay>
    </Page>
  );
}
